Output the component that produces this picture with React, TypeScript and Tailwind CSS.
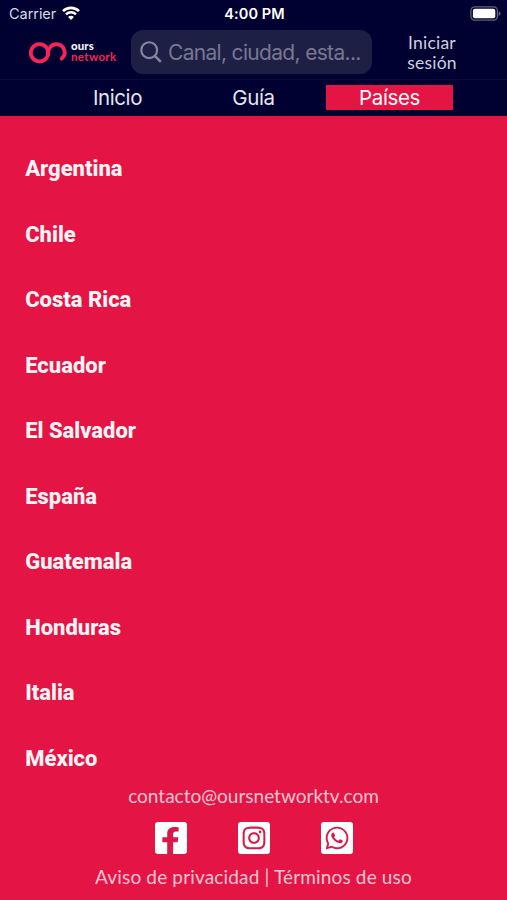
import { FaFacebookF, FaInstagram, FaWhatsapp } from 'react-icons/fa';

const countries = [
  'Argentina',
  'Chile',
  'Costa Rica',
  'Ecuador',
  'El Salvador',
  'España',
  'Guatemala',
  'Honduras',
  'Italia',
  'México',
];

function StatusBar() {
  return (
    <div className="grid h-[27px] grid-cols-3 items-center pr-[6px] pl-[9px] text-white">
      <div className="flex items-center gap-[6px]">
        <span className="text-[14.5px] leading-[27px] tracking-[-0.05px] text-[#d9d9e4]">Carrier</span>
        <svg className="mb-[2px] h-[14px] w-[18px]" viewBox="0 0 18 14" fill="none" stroke="currentColor">
          <path d="M1 5.1a11.4 11.4 0 0 1 16 0" strokeWidth="2.7" />
          <path d="M4 8.3a7.1 7.1 0 0 1 10 0" strokeWidth="2.4" />
          <path d="M9 13.9 6.1 11a3.9 3.9 0 0 1 5.8 0z" fill="currentColor" stroke="none" />
        </svg>
      </div>
      <span className="mr-px text-center text-[14.5px] leading-[27px] font-semibold tracking-[0.1px] whitespace-nowrap">
        4:00 PM
      </span>
      <svg className="h-[15px] w-[31px] justify-self-end" viewBox="0 0 31 15">
        <rect x="0.9" y="0.9" width="26.5" height="13.2" rx="3.8" fill="#000031" stroke="#62627e" strokeWidth="1.3" />
        <rect x="2.9" y="2.8" width="22.4" height="9.4" rx="2" fill="white" />
        <path d="M28.6 5.2c2.7 1 2.7 3.8 0 4.8z" fill="#62627e" />
      </svg>
    </div>
  );
}

function Logo() {
  return (
    <div className="flex w-[89px] items-center gap-[4px]">
      <svg className="h-[23px] w-[38px] shrink-0" viewBox="0 0 38 23" fill="none" stroke="#f32559" strokeWidth="3.9">
        <path d="M19.2 11.8a8.7 8.7 0 1 1-2.5-6.1c1.7 1.7 2.5 3.8 2.5 6.1" />
        <path d="M18.9 13.4c.2-6 3.5-10.1 8.6-10.1a8.1 8.1 0 0 1 5.2 14.3" strokeLinecap="round" />
      </svg>
      <div className="flex flex-col pb-[2px] font-['Lato',sans-serif]">
        <span className="text-[11.5px] leading-[11px] font-black tracking-[0.1px] text-[#f1f1ff]">ours</span>
        <span className="text-[11.5px] leading-[11px] font-bold tracking-[0.35px] text-[#f32559]">network</span>
      </div>
    </div>
  );
}

function Header() {
  return (
    <div className="flex h-[53px] items-start border-b border-[#0b0c36] pl-[29px]">
      <div className="flex h-[50px] items-center">
        <Logo />
      </div>
      <div className="mt-[3px] ml-[13px] flex h-[44px] w-[241px] items-center rounded-[12px] bg-[#1e1f45] pl-[9px]">
        <svg className="mr-[6px] h-[22px] w-[22px]" viewBox="0 0 22 22" fill="none" stroke="#85869f" strokeWidth="2.1">
          <circle cx="9.2" cy="9.2" r="7.9" />
          <path d="m14.8 14.8 6 6" strokeWidth="2.6" />
        </svg>
        <span className="pt-px text-[21px] leading-[43px] tracking-[-0.68px] whitespace-nowrap text-[#777890]">
          Canal, ciudad, esta...
        </span>
      </div>
      <a className="mt-[6px] ml-[29px] w-[62px] text-center font-['Lato',sans-serif] text-[17.5px] leading-[20px] tracking-[0.2px] text-[#cfcfde]">
        Iniciar
        <br />
        sesión
      </a>
    </div>
  );
}

function Nav() {
  return (
    <nav className="flex h-[36px] items-center justify-center pb-px text-[20.5px] leading-[26px] tracking-[-0.4px] text-[#e5e5f0]">
      <a className="w-[127px] text-center">Inicio</a>
      <a className="mx-[9px] w-[127px] text-center">Guía</a>
      <a className="h-[25px] w-[127px] bg-[#e41445] text-center text-white">Países</a>
    </nav>
  );
}

function Footer() {
  return (
    <footer className="flex flex-col items-center font-['Lato',sans-serif] text-[#ffc5d3]">
      <span className="text-[19px] leading-[24px]">contacto@oursnetworktv.com</span>
      <div className="mt-[14px] flex gap-[51px] text-[#d91a48]">
        <a className="flex h-[32px] w-[32px] items-end justify-center overflow-hidden rounded-[3px] bg-white">
          <FaFacebookF className="h-[27px] w-[19px]" preserveAspectRatio="none" />
        </a>
        <a className="flex h-[32px] w-[32px] items-center justify-center rounded-[3px] bg-white">
          <FaInstagram className="h-[26px] w-[26px]" />
        </a>
        <a className="flex h-[32px] w-[32px] items-center justify-center rounded-[3px] bg-white">
          <FaWhatsapp className="h-[26px] w-[26px]" />
        </a>
      </div>
      <span className="mt-[11px] text-[19px] leading-[24px] tracking-[0.16px]">
        Aviso de privacidad | Términos de uso
      </span>
    </footer>
  );
}

export default function App() {
  return (
    <div className="flex h-[900px] w-[507px] flex-col overflow-hidden bg-[#e41445] font-['Inter',sans-serif]">
      <header className="bg-[#000031]">
        <StatusBar />
        <Header />
        <Nav />
      </header>
      <ul className="flex h-[668px] flex-col pt-[20.2px] pl-[25.2px] font-['Roboto',sans-serif] text-[22px] font-extrabold text-[#fff4f5]">
        {countries.map((country) => (
          <li key={country} className="flex h-[65.5px] shrink-0 items-center">
            {country}
          </li>
        ))}
      </ul>
      <Footer />
    </div>
  );
}
